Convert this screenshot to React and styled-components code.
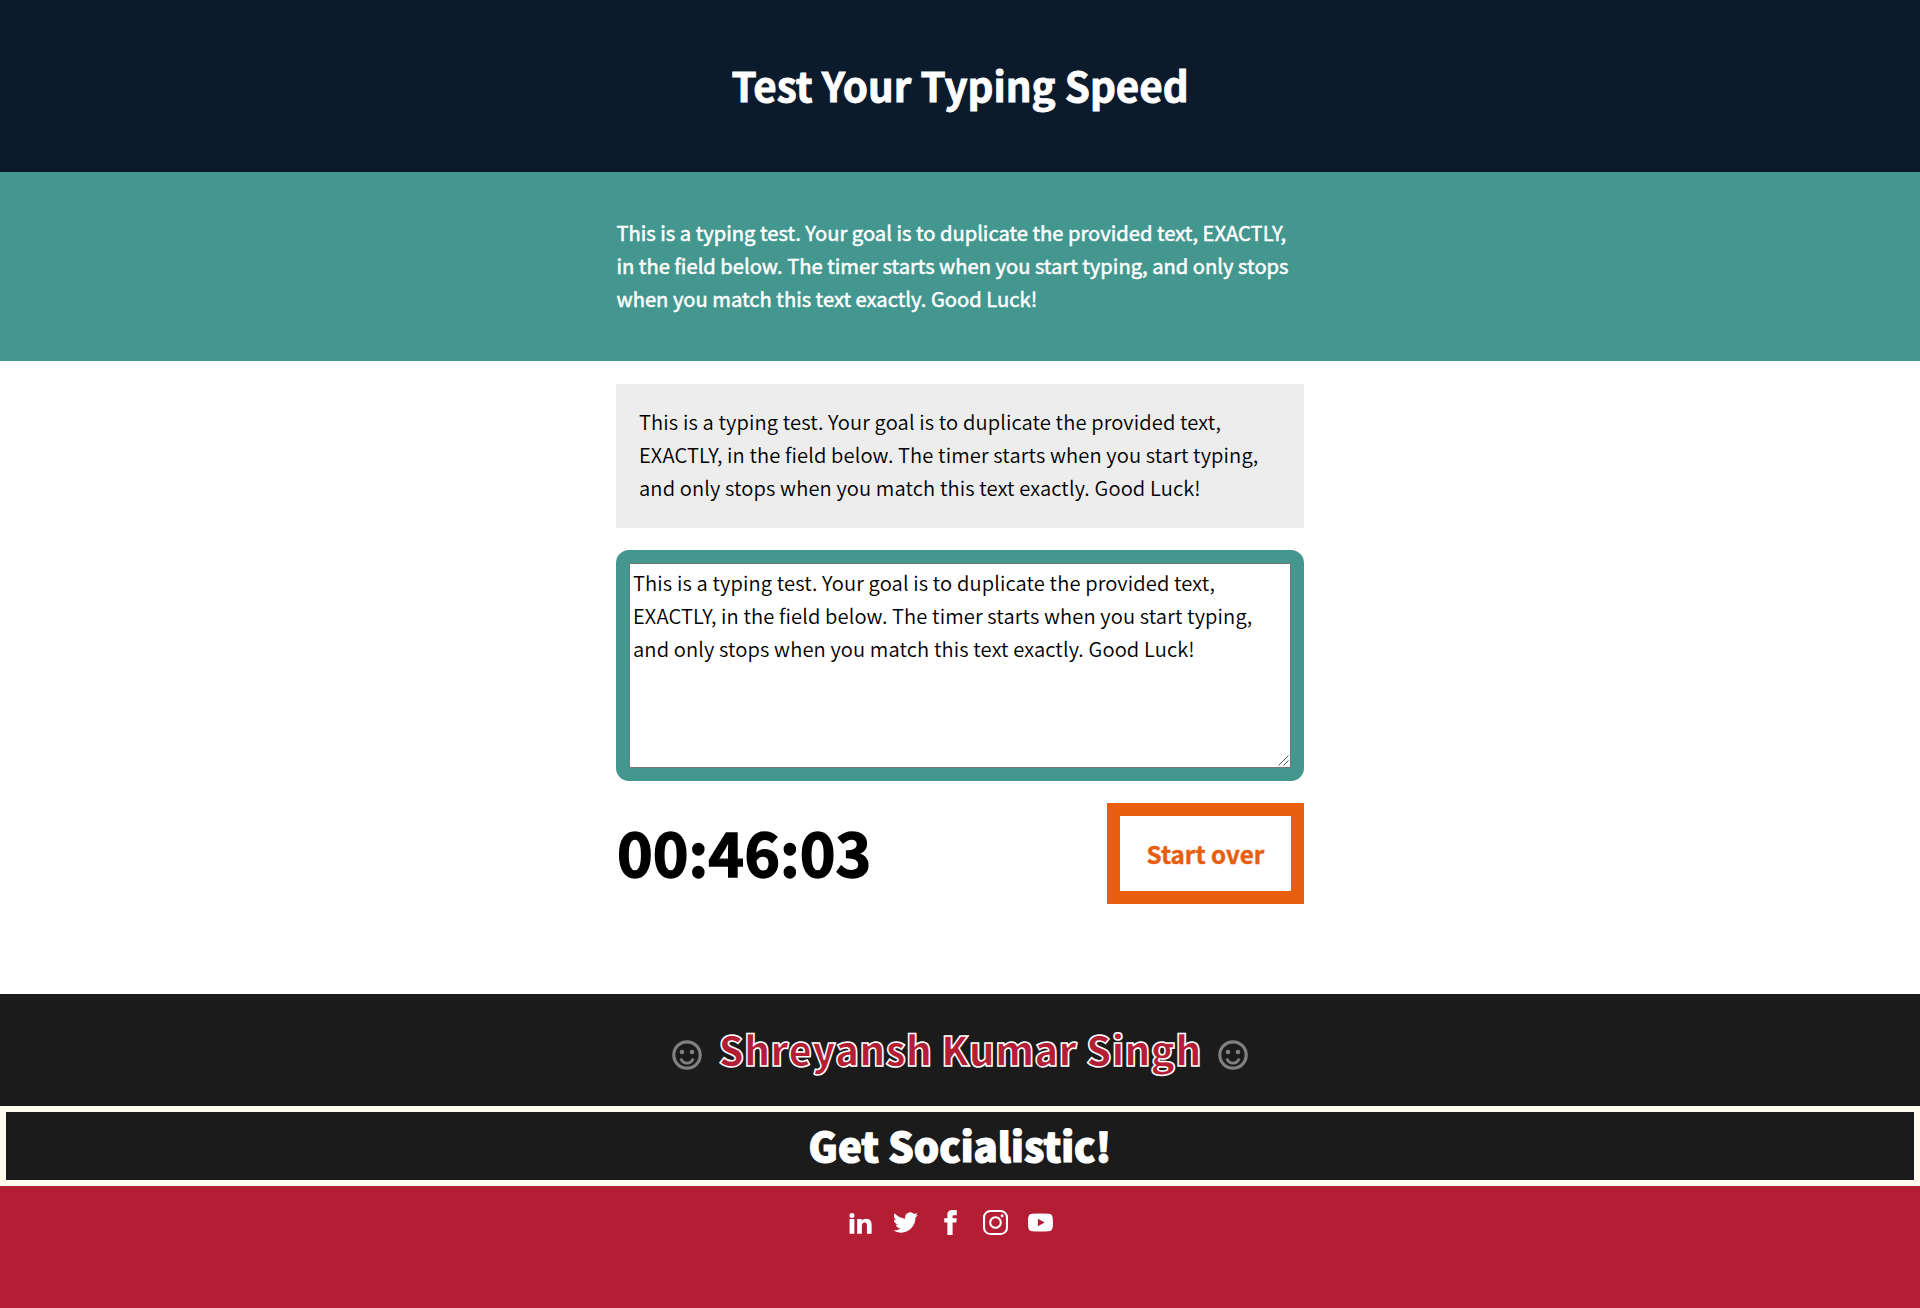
import React from "react";
import styled, { createGlobalStyle } from "styled-components";

const SAMPLE =
  "This is a typing test. Your goal is to duplicate the provided text, EXACTLY, in the field below. The timer starts when you start typing, and only stops when you match this text exactly. Good Luck!";

const GlobalStyle = createGlobalStyle`
  *, *::before, *::after { box-sizing: border-box; }
  body {
    margin: 0;
    background: #fff;
    color: #000;
    font-family: "Noto Sans CJK SC", "Open Sans", sans-serif;
    font-size: 20.14px;
    font-weight: 350;
    line-height: 33px;
  }
  h1, h2, p { margin: 0; }
`;

const Page = styled.div`
  display: flex;
  flex-direction: column;
  min-height: 1308px;
`;

const Masthead = styled.header`
  height: 172px;
  padding-top: 53px;
  background: #0c1b2c;
  color: #fff;
  text-align: center;
`;

const Title = styled.h1`
  font-size: 40.3px;
  line-height: 64px;
  font-weight: 700;
  -webkit-text-stroke: 0.9px currentColor;
`;

const Intro = styled.section`
  height: 189px;
  padding-top: 44px;
  background: #43978f;
  color: #fff;
`;

const Column = styled.div`
  width: 688px;
  margin: 0 auto;
`;

const IntroText = styled.p`
  padding-left: 0.5px;
  font-weight: 400;
  font-size: 20.16px;
  -webkit-text-stroke: 0.5px currentColor;
`;

const Main = styled.main`
  height: 633px;
  padding-top: 23px;
`;

const Origin = styled.div`
  padding: 21px 23px 24px;
  background: #ededed;
  letter-spacing: 0.12px;
`;

const TestWrap = styled.div`
  position: relative;
  display: flex;
  height: 231px;
  margin-top: 22px;
  border: 13px solid #43978f;
  border-radius: 13px;
`;

const TestArea = styled.textarea`
  flex: 1;
  padding: 2px 3px;
  border: 1px solid #767676;
  background: #fff;
  color: #000;
  font: inherit;
  letter-spacing: 0.12px;
  outline: 0;
  resize: none;
`;

const Grip = styled.svg`
  position: absolute;
  right: 2px;
  bottom: 2px;
  width: 11px;
  height: 11px;
`;

const Meta = styled.div`
  display: flex;
  justify-content: space-between;
  align-items: flex-start;
  margin-top: 22px;
`;

const Timer = styled.div`
  font-size: 60.7px;
  line-height: 90px;
  font-weight: 700;
  padding: 3px 0 0 1px;
  -webkit-text-stroke: 1.4px currentColor;
`;

const Reset = styled.button`
  width: 197px;
  height: 101px;
  padding: 0;
  border: 13px solid #e95d0f;
  background: #fff;
  color: #e95d0f;
  font: inherit;
  font-size: 24.2px;
  font-weight: 700;
  -webkit-text-stroke: 0.4px currentColor;
`;

const Author = styled.section`
  display: flex;
  justify-content: center;
  height: 112px;
  gap: 17px;
  padding-top: 23px;
  background: #1b1b1b;
`;

const AuthorName = styled.h2`
  color: #b41e35;
  font-size: 39.9px;
  line-height: 64px;
  font-weight: 900;
  -webkit-text-stroke: 1.5px #fff;
`;

const Smile = styled.svg`
  width: 30px;
  height: 30px;
  margin-top: 23px;
`;

const Social = styled.h2`
  height: 80px;
  border: 6px solid #fffced;
  background: #1b1b1b;
  color: #fff;
  font-size: 40px;
  line-height: 66px;
  font-weight: 900;
  text-align: center;
  -webkit-text-stroke: 1.2px #fff;
`;

const Links = styled.footer`
  display: flex;
  flex: 1;
  justify-content: center;
  gap: 20px;
  padding: 24px 20px 0 0;
  background: #b41e35;
`;

const Glyph = styled.svg`
  width: 25px;
  height: 25px;
  fill: #fff;
`;

function Smiley() {
  return (
    <Smile viewBox="0 0 30 30" fill="none" stroke="#808080">
      <circle cx="15" cy="15" r="13.2" strokeWidth="3.2" />
      <circle cx="10" cy="12" r="2.3" fill="#808080" stroke="none" />
      <circle cx="20" cy="12" r="2.3" fill="#808080" stroke="none" />
      <path d="M8.8 18.500c2.300 6.200 10.100 6.200 12.400 0" strokeWidth="2.8" />
    </Smile>
  );
}

const Icon = ({ children, label }) => (
  <Glyph viewBox="0 0 24 24" role="img" aria-label={label}>
    {children}
  </Glyph>
);

export default function App() {
  return (
    <Page>
      <GlobalStyle />
      <Masthead>
        <Title>Test Your Typing Speed</Title>
      </Masthead>
      <Intro>
        <Column>
          <IntroText>{SAMPLE}</IntroText>
        </Column>
      </Intro>
      <Main>
        <Column>
          <Origin>
            <p>{SAMPLE}</p>
          </Origin>
          <TestWrap>
            <TestArea defaultValue={SAMPLE} spellCheck={false} />
            <Grip viewBox="0 0 11 11" stroke="#555" strokeWidth="1">
              <path d="M0.500 10.500L10.500 0.500M5.500 10.500L10.500 5.500" />
            </Grip>
          </TestWrap>
          <Meta>
            <Timer>00:46:03</Timer>
            <Reset>Start over</Reset>
          </Meta>
        </Column>
      </Main>
      <Author>
        <Smiley />
        <AuthorName>Shreyansh Kumar Singh</AuthorName>
        <Smiley />
      </Author>
      <Social>Get Socialistic!</Social>
      <Links>
        <Icon label="LinkedIn">
          <path d="M1.500 8.700h4.600v14H1.500zM3.800 2.800a2.400 2.400 0 1 1 0 4.800 2.400 2.400 0 0 1 0-4.800zM8.800 8.700h4.400v1.900c.8-1.400 2.300-2.200 4.200-2.200 4.400 0 5.300 2.700 5.300 6.500v7.800h-4.500v-7c0-1.700-.1-3.700-2.300-3.700s-2.600 1.700-2.600 3.600v7.100H8.800z" />
        </Icon>
        <Icon label="Twitter">
          <path d="M23.953 4.570a10 10 0 01-2.825.775 4.958 4.958 0 002.163-2.723c-.951.555-2.005.959-3.127 1.184a4.920 4.920 0 00-8.384 4.482C7.690 8.095 4.067 6.130 1.640 3.162a4.822 4.822 0 00-.666 2.475c0 1.710.870 3.213 2.188 4.096a4.904 4.904 0 01-2.228-.616v.060a4.923 4.923 0 003.946 4.827 4.996 4.996 0 01-2.212.085 4.936 4.936 0 004.604 3.417 9.867 9.867 0 01-6.102 2.105c-.390 0-.779-.023-1.170-.067a13.995 13.995 0 007.557 2.209c9.053 0 13.998-7.496 13.998-13.985 0-.210 0-.420-.015-.630A9.935 9.935 0 0024 4.590z" />
        </Icon>
        <Icon label="Facebook">
          <path d="M9 8H6v4h3v12h5V12h3.642L18 8h-4V6.333C14 5.378 14.192 5 15.115 5H18V0h-3.808C10.596 0 9 1.583 9 4.615z" />
        </Icon>
        <Icon label="Instagram">
          <rect x="1" y="1" width="22" height="22" rx="6" fill="none" stroke="#fff" strokeWidth="2" />
          <circle cx="12" cy="12" r="5.100" fill="none" stroke="#fff" strokeWidth="2" />
          <circle cx="18.400" cy="5.600" r="1.440" />
        </Icon>
        <Icon label="YouTube">
          <path fillRule="evenodd" d="M4 3.600Q12 3 20 3.600C23 3.800 24 5.500 24 12s-1 8.200-4 8.400Q12 21 4 20.400C1 20.200 0 18.500 0 12s1-8.200 4-8.400zM9.500 8.500v7l6.500-3.500z" />
        </Icon>
      </Links>
    </Page>
  );
}
